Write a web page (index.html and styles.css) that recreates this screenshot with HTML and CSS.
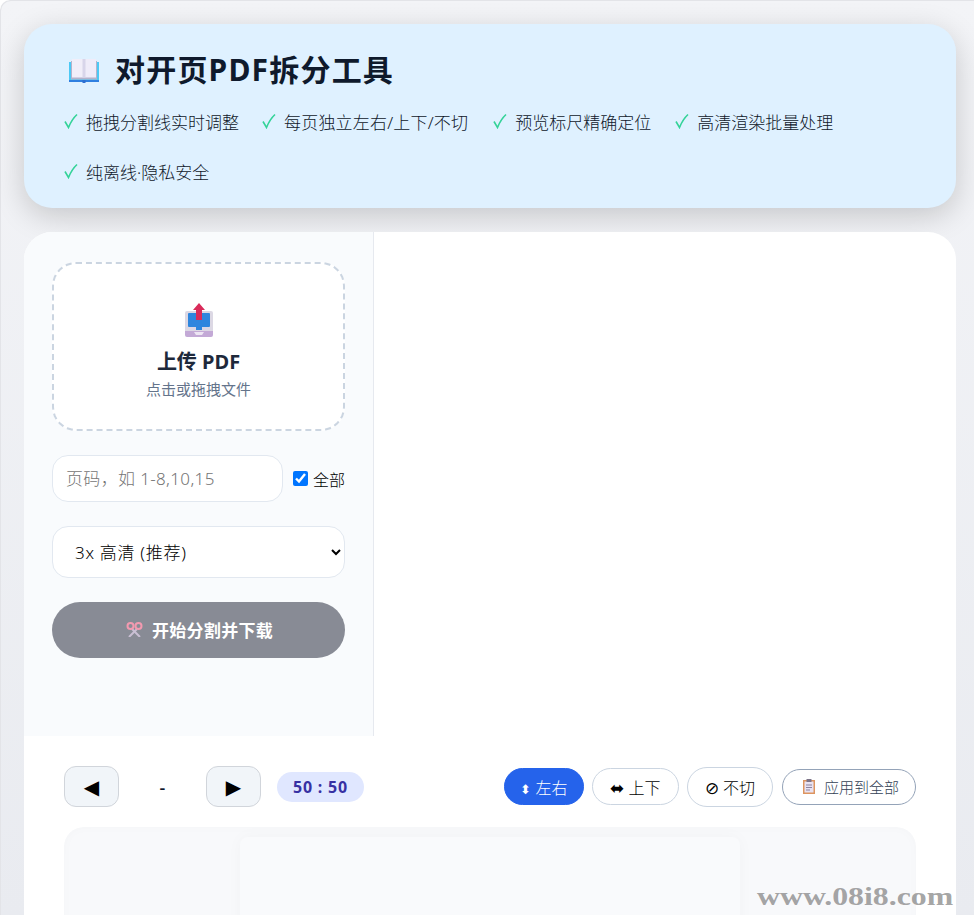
FILE: index.html
```html
<!DOCTYPE html>
<html lang="zh">
<head>
<meta charset="utf-8">
<title>对开页PDF拆分工具</title>
<link rel="stylesheet" href="styles.css">
</head>
<body>
<svg class="defs" width="0" height="0"><symbol id="tick" viewBox="0 0 14 16"><path fill="none" stroke="#34d399" stroke-width="1.600" d="M1 8.500l3.500 6Q8 6 13 1.500"/></symbol></svg>
<div class="app">
  <header class="hero">
    <h1>
      <svg class="book" viewBox="0 0 30 24" width="30" height="24"><path fill="#4cc9f5" d="M0 3h30v20H0z"/><path fill="#2f7fe0" d="M0 21h30v2H0z"/><path fill="#2f6fd0" d="M13.500 21h3v3h-3z"/><path fill="#b5b3cc" d="M2 2h26v18.500H2z"/><path fill="#f1eef9" d="M3 0h10.500q1 0 1.500 1v17.500H3z"/><path fill="#efecf9" d="M15 1q.5-1 1.500-1H27v18.500H15z"/><path fill="#d8d5ea" d="M13.500 0h3v18.500h-3z"/></svg>
      <span>对开页PDF拆分工具</span>
    </h1>
    <ul class="features">
      <li><svg class="tick" width="14" height="16"><use href="#tick"/></svg>拖拽分割线实时调整</li>
      <li><svg class="tick" width="14" height="16"><use href="#tick"/></svg><span class="slashy">每页独立左右/上下/不切</span></li>
      <li><svg class="tick" width="14" height="16"><use href="#tick"/></svg>预览标尺精确定位</li>
      <li><svg class="tick" width="14" height="16"><use href="#tick"/></svg>高清渲染批量处理</li>
      <li><svg class="tick" width="14" height="16"><use href="#tick"/></svg>纯离线·隐私安全</li>
    </ul>
  </header>
  <main class="card">
    <div class="top">
      <aside class="side">
        <div class="drop">
          <svg class="up" viewBox="0 0 30 36" width="30" height="36"><path fill="#c3a9d6" d="M1 24h28v8q0 2-2 2H3q-2 0-2-2z"/><path fill="#dcd8e4" d="M3 8h24q2 0 2 2v18H1V10q0-2 2-2z"/><path fill="#2e86de" d="M4 11q0-1 1-1h20q1 0 1 1v12q0 1-1 1h-7v3h-6v-3H5q-1 0-1-1z"/><path fill="#fff" opacity=".7" d="M10 29h10l-2 3h-6z"/><path fill="#d92b5a" d="M15 0l6 7h-3v10h-6V7H9z"/></svg>
          <div class="drop-title">上传 PDF</div>
          <div class="drop-sub">点击或拖拽文件</div>
        </div>
        <div class="range">
          <input class="field" type="text" placeholder="页码，如 1-8,10,15">
          <label class="all"><input type="checkbox" checked>全部</label>
        </div>
        <select class="dpi"><option>3x 高清 (推荐)</option></select>
        <button class="go">
          <svg viewBox="0 0 17 15" width="17" height="15"><path stroke="#c9bfd3" stroke-width="2" fill="none" d="M6 7l8 8M11 7l-8 8"/><circle cx="4.500" cy="4" r="3" fill="none" stroke="#f39ab0" stroke-width="2"/><circle cx="12.500" cy="4" r="3" fill="none" stroke="#f39ab0" stroke-width="2"/></svg>
          <span>开始分割并下载</span>
        </button>
      </aside>
      <section class="blank"></section>
    </div>
    <div class="toolbar">
      <button class="nav">◀</button>
      <span class="pageno">-</span>
      <button class="nav">▶</button>
      <span class="ratio">50 : 50</span>
      <div class="modes">
        <button class="mode on"><span class="gl small">⬍</span> 左右</button>
        <button class="mode"><span class="gl">⬌</span> 上下</button>
        <button class="mode tall"><span class="gl">⊘</span> 不切</button>
        <button class="mode apply">
          <svg viewBox="0 0 12 15" width="12" height="15"><path fill="#dd9560" d="M0 1h12v14H0z"/><path fill="#e8e2f2" d="M1.500 2.500h9v11h-9z"/><path fill="#7d7488" d="M3.500 0h5v3h-5z"/><path stroke="#8d84a0" d="M3 6h6M3 8.500h6M3 11h4"/></svg>
          <span>应用到全部</span>
        </button>
      </div>
    </div>
    <div class="stage"><div class="sheet"></div></div>
  </main>
</div>
<div class="mark">www.08i8.com</div>
</body>
</html>
```
FILE: styles.css
```css
* { box-sizing: border-box; }
html, body { margin: 0; height: 915px; overflow: hidden; background: #fff; }
body { font-family: "Noto Sans", "Noto Sans CJK SC", sans-serif; color: #000; }
.defs { position: absolute; }
.app {
  height: 915px;
  padding: 24px 18px 0 24px;
  background: #eaecf1;
  background-image: linear-gradient(#f3f4f7, #e9ebf0);
  border-top-left-radius: 10px;
  box-shadow: inset 1px 1px 0 #e3e4e8;
  overflow: hidden;
}
.hero {
  height: 184px;
  padding: 22px 40px 0;
  background: #dff1ff;
  border-radius: 28px;
  box-shadow: 0 8px 30px rgba(0,0,0,.18);
}
h1 {
  display: flex;
  align-items: center;
  gap: 16px;
  height: 44px;
  margin: 0 0 0 5px;
  font-size: 30px;
  font-weight: 700;
  letter-spacing: 1.2px;
  color: #0f1a2c;
}
.book { margin-top: 5px; }
.features {
  display: flex;
  flex-wrap: wrap;
  gap: 0 22px;
  margin: 6px 0 0;
  padding: 0;
  list-style: none;
  font-size: 17px;
  color: #0f172a;
}
.features li { display: flex; align-items: center; height: 50px; font-weight: 300; }
.features li:nth-child(2) { margin-left: 1px; }
.features li:nth-child(3) { margin-left: 3px; }
.features li:nth-child(4) { margin-left: 2px; }
.slashy { letter-spacing: .2px; }
.tick { margin-right: 8px; }
.card {
  margin-top: 24px;
  height: 700px;
  background: #fff;
  border-radius: 28px 28px 0 0;
  overflow: hidden;
}
.top { display: flex; height: 504px; }
.side {
  flex: 0 0 350px;
  padding: 30px 28px;
  background: #f9fbfd;
  border-right: 1px solid #e6e9ef;
}
.blank { flex: 1; }
.drop {
  display: flex;
  flex-direction: column;
  align-items: center;
  height: 169px;
  padding-top: 39px;
  background: #fff;
  border: 2px dashed #cbd5e1;
  border-radius: 24px;
}
.drop-title { margin-top: 8px; font-size: 20px; font-weight: 700; line-height: 30px; color: #1e293b; }
.drop-sub { font-size: 15px; line-height: 24px; font-weight: 400; color: #64748b; }
.range { display: flex; align-items: center; gap: 10px; margin-top: 24px; }
.field {
  width: 231px;
  height: 47px;
  padding: 0 13px;
  border: 1px solid #e2e8f0;
  border-radius: 16px;
  font: 300 17px "Noto Sans", "Noto Sans CJK SC", sans-serif;
  background: #fff;
}
.field::placeholder { color: #757575; letter-spacing: .35px; }
.all { display: flex; align-items: center; gap: 5px; font-size: 16px; font-weight: 300; white-space: nowrap; }
.all input { width: 15px; height: 15px; margin: 0; }
.dpi {
  display: block;
  width: 293px;
  height: 52px;
  margin-top: 24px;
  padding: 0 18px;
  border: 1px solid #e2e8f0;
  border-radius: 16px;
  background: #fff;
  font: 300 17px "Noto Sans", "Noto Sans CJK SC", sans-serif;
  letter-spacing: .7px;
  color: #000;
}
.go {
  display: flex;
  align-items: center;
  justify-content: center;
  gap: 9px;
  width: 293px;
  height: 56px;
  margin-top: 24px;
  padding: 0 0 2px 2px;
  border: 0;
  border-radius: 28px;
  background: #888b95;
  color: #fff;
  font: 700 17px "Noto Sans", "Noto Sans CJK SC", sans-serif;
  letter-spacing: .3px;
}
.toolbar { display: flex; align-items: center; height: 91px; padding: 10px 40px 0; }
.nav {
  width: 55px;
  height: 41px;
  padding: 0;
  background: #f1f5f9;
  border: 1px solid #d1d5db;
  border-radius: 12px;
  font: 20px "DejaVu Sans", sans-serif;
  color: #000;
}
.pageno { width: 87px; text-align: center; font-size: 18px; font-weight: 500; color: #0f172a; }
.ratio {
  width: 87px;
  height: 30px;
  margin-left: 16px;
  line-height: 30px;
  text-align: center;
  border-radius: 15px;
  background: #e0e7ff;
  color: #3730a3;
  font-size: 16px;
  font-weight: 700;
  letter-spacing: .8px;
}
.modes { display: flex; align-items: center; gap: 8px; margin-left: auto; }
.mode {
  width: 87px;
  height: 37px;
  padding: 0;
  background: #fff;
  border: 1px solid #cbd5e1;
  border-radius: 20px;
  font: 300 16px "Noto Sans", "Noto Sans CJK SC", sans-serif;
  color: #000;
}
.gl { font-family: "DejaVu Sans", sans-serif; font-size: 17px; }
.gl.small { font-size: 13px; }
.mode.on { width: 80px; background: #2563eb; border-color: #2563eb; color: #fff; }
.mode.tall { width: 86px; height: 40px; }
.mode.apply {
  display: flex;
  align-items: center;
  justify-content: center;
  gap: 9px;
  width: 134px;
  height: 36px;
  margin-left: 1px;
  padding-left: 4px;
  border-color: #94a3b8;
  font-size: 15px;
  color: #334155;
}
.stage {
  position: relative;
  display: flex;
  justify-content: center;
  height: 200px;
  margin: 0 40px;
  padding-top: 10px;
  background: #f8f9fb;
  border-radius: 20px 20px 0 0;
  box-shadow: inset 0 0 12px rgba(0,0,0,.02);
}
.sheet {
  width: 500px;
  height: 100%;
  background: #f9fafc;
  border-radius: 8px 8px 0 0;
  box-shadow: 0 0 16px rgba(0,0,0,.03);
}
.mark {
  position: absolute;
  right: 21px;
  bottom: 3px;
  font: 700 26px "Liberation Serif", serif;
  color: rgba(120,120,120,.68);
  transform: scaleX(1.225);
  transform-origin: right center;
}
```
